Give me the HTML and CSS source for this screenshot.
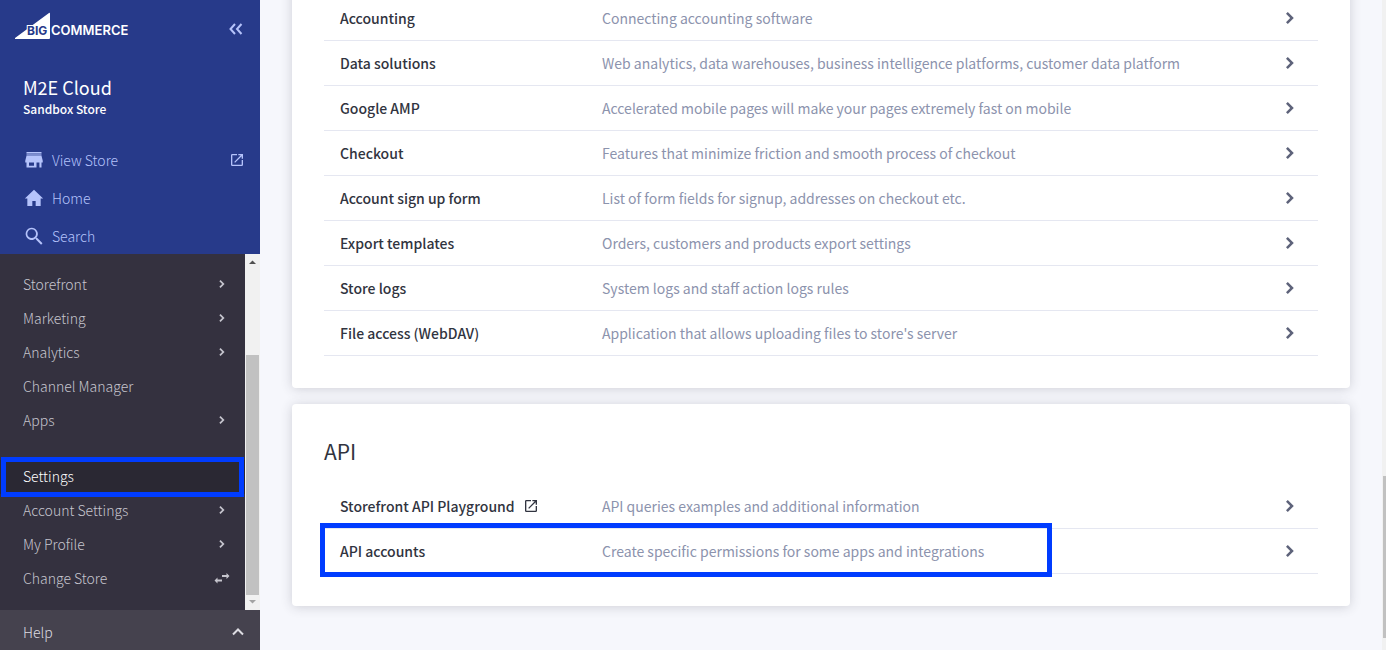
FILE: index.html
```html
<!DOCTYPE html>
<html lang="en">
<head>
<meta charset="utf-8">
<title>Settings - M2E Cloud</title>
<link rel="stylesheet" href="styles.css">
</head>
<body>
<svg class="sprite" aria-hidden="true">
  <symbol id="chevron" viewBox="0 0 24 24"><path d="M8 16.200 9.800 18l6-6-6-6L8 7.800 12.200 12z"/></symbol>
  <symbol id="open" viewBox="0 0 24 24"><path d="M19 19H5V5h7V3H5a2 2 0 0 0-2 2v14a2 2 0 0 0 2 2h14a2 2 0 0 0 2-2v-7h-2v7zM14 3v2h3.590l-9.830 9.830 1.410 1.410L19 6.410V10h2V3h-7z"/></symbol>
</svg>
<aside class="sidebar">
  <header class="sidebar-top">
    <div class="brand">
      <svg class="logo" viewBox="0 0 118 28" role="img" aria-label="BigCommerce">
        <path class="logo-shape" d="M0 26 34 1q1-1 1 1v24q0 1-1 1H1q-2 0-1-1z"/>
        <text class="logo-big" x="12" y="23">BIG</text>
        <text class="logo-text" x="36" y="23">COMMERCE</text>
      </svg>
      <button class="collapse" aria-label="Collapse menu">
        <svg viewBox="0 0 14 14"><path d="M6 2 1.500 7 6 12M12.500 2 8 7l4.500 5"/></svg>
      </button>
    </div>
    <div class="store">
      <div class="store-name">M2E Cloud</div>
      <div class="store-type">Sandbox Store</div>
    </div>
    <nav class="quick">
      <a href="#"><svg class="quick-icon" viewBox="0 0 24 24"><path opacity=".6" d="M3 4h18v3H3z"/><path d="M3 2.500h18V4H3zM3 7h18l1.500 6v2H21v6h-2.500v-6h-3.500v6H3v-6H1.500v-2zM6 15v4h6v-4z"/></svg><span>View Store</span><svg class="quick-open"><use href="#open"/></svg></a>
      <a href="#"><svg class="quick-icon" viewBox="0 0 24 24"><path d="M10 21.500v-6h4v6h6V12.500H23L12 2 1 12.500h3v9z"/></svg><span>Home</span></a>
      <a href="#"><svg class="quick-icon" viewBox="0 0 24 24"><path d="M16 14.500h-.8l-.3-.3A7.300 7.300 0 1 0 14 15.100l.3.3v.8l6.200 6.200 1.700-1.700zM9.200 14.500A5.200 5.200 0 1 1 9.200 4a5.200 5.200 0 0 1 0 10.500z"/></svg><span>Search</span></a>
    </nav>
  </header>
  <div class="menu-area">
    <nav class="menu">
      <a href="#"><span>Storefront</span><svg><use href="#chevron"/></svg></a>
      <a href="#"><span>Marketing</span><svg><use href="#chevron"/></svg></a>
      <a href="#"><span>Analytics</span><svg><use href="#chevron"/></svg></a>
      <a href="#"><span>Channel Manager</span></a>
      <a href="#"><span>Apps</span><svg><use href="#chevron"/></svg></a>
      <a href="#" class="current"><span>Settings</span></a>
      <a href="#"><span>Account Settings</span><svg><use href="#chevron"/></svg></a>
      <a href="#"><span>My Profile</span><svg><use href="#chevron"/></svg></a>
      <a href="#"><span>Change Store</span><svg viewBox="0 0 16 16"><path d="M8 5h4.500V3l3 3-3 3V7H8zM8 9.500H3.500v-2l-3 3 3 3v-2H8z"/></svg></a>
    </nav>
    <div class="menu-scroll">
      <svg viewBox="0 0 15 15"><path d="M4 10h7L7.500 6.500z"/></svg>
      <div class="menu-thumb"></div>
      <svg class="faded" viewBox="0 0 15 15"><path d="M4 5h7L7.500 8.500z"/></svg>
    </div>
  </div>
  <button class="help"><span>Help</span><svg viewBox="0 0 12 12"><path d="m1 8.500 5-5 5 5"/></svg></button>
</aside>
<main class="content">
  <section class="card card-top">
    <a class="row" href="#"><span class="name">Accounting</span><span class="desc">Connecting accounting software</span><svg class="go"><use href="#chevron"/></svg></a>
    <a class="row" href="#"><span class="name">Data solutions</span><span class="desc">Web analytics, data warehouses, business intelligence platforms, customer data platform</span><svg class="go"><use href="#chevron"/></svg></a>
    <a class="row" href="#"><span class="name">Google AMP</span><span class="desc">Accelerated mobile pages will make your pages extremely fast on mobile</span><svg class="go"><use href="#chevron"/></svg></a>
    <a class="row" href="#"><span class="name">Checkout</span><span class="desc">Features that minimize friction and smooth process of checkout</span><svg class="go"><use href="#chevron"/></svg></a>
    <a class="row" href="#"><span class="name">Account sign up form</span><span class="desc">List of form fields for signup, addresses on checkout etc.</span><svg class="go"><use href="#chevron"/></svg></a>
    <a class="row" href="#"><span class="name">Export templates</span><span class="desc">Orders, customers and products export settings</span><svg class="go"><use href="#chevron"/></svg></a>
    <a class="row" href="#"><span class="name">Store logs</span><span class="desc">System logs and staff action logs rules</span><svg class="go"><use href="#chevron"/></svg></a>
    <a class="row" href="#"><span class="name">File access (WebDAV)</span><span class="desc">Application that allows uploading files to store's server</span><svg class="go"><use href="#chevron"/></svg></a>
  </section>
  <section class="card">
    <h2>API</h2>
    <a class="row" href="#"><span class="name">Storefront API Playground<svg class="name-open"><use href="#open"/></svg></span><span class="desc">API queries examples and additional information</span><svg class="go"><use href="#chevron"/></svg></a>
    <a class="row marked" href="#"><span class="name">API accounts</span><span class="desc">Create specific permissions for some apps and integrations</span><svg class="go"><use href="#chevron"/></svg></a>
  </section>
</main>
<div class="page-scroll"><div class="page-thumb"></div></div>
</body>
</html>
```
FILE: styles.css
```css
* { box-sizing: border-box; }
body {
  margin: 0;
  height: 100vh;
  display: flex;
  overflow: hidden;
  background: #f6f7fc;
  font-family: "Noto Sans CJK SC", "Open Sans", sans-serif;
  font-size: 14px;
  line-height: 24px;
}
a { color: inherit; text-decoration: none; }
button { border: 0; padding: 0; background: none; font: inherit; color: inherit; }
svg { fill: currentColor; flex: none; }
.sprite { position: absolute; width: 0; height: 0; }

.sidebar {
  flex: 0 0 260px;
  display: flex;
  flex-direction: column;
  background: #34313f;
  color: #c6c5ce;
  font-weight: 300;
}
.sidebar-top {
  padding: 12px 15px 0;
  background: #273a8a;
  color: #b5c3fb;
  height: 254px;
}
.brand { display: flex; justify-content: space-between; align-items: flex-start; height: 32px; }
.logo { width: 118px; height: 28px; color: #fff; }
.logo-text { font: 600 13px Inter, sans-serif; }
.logo-big {
  font: 700 12px Inter, sans-serif;
  fill: #273a8a;
  stroke: #fff;
  stroke-width: 2px;
  paint-order: stroke;
}
.collapse { width: 14px; height: 14px; margin: 10px 2px 0; display: flex; }
.collapse svg, .help svg { width: 100%; fill: none; stroke: currentColor; stroke-width: 2; }
.store { padding: 32px 8px 0; color: #fff; font-weight: 400; }
.store-name { font-size: 18px; line-height: 22px; }
.store-type { font-size: 12px; line-height: 22px; font-weight: 500; }
.quick { padding: 21px 0 0 8px; }
.quick a { display: flex; align-items: center; height: 38px; }
.quick span { flex: 1; padding-left: 7px; }
.quick-icon { width: 22px; height: 20px; }
.quick-open { width: 16px; height: 16px; }

.menu-area { flex: 1; min-height: 0; display: flex; }
.menu { flex: 1; padding-top: 14px; }
.menu a { display: flex; align-items: center; height: 34px; padding: 0 15px 2px 23px; }
.menu span { flex: 1; }
.menu svg { width: 16px; height: 16px; }
.menu .current { position: relative; margin-top: 22px; background: #2a2833; color: #fff; }
.current::after, .marked::after {
  content: "";
  position: absolute;
  inset: -3px 1px;
  border: 5px solid #003cff;
}
.menu-scroll { width: 15px; background: #f1f1f1; display: flex; flex-direction: column; color: #505050; }
.menu-scroll svg { width: 15px; height: 15px; }
.menu-scroll .faded { color: #a3a3a3; }
.menu-thumb { flex: 1; margin: 86px 1px 0; background: #c1c1c1; }
.help {
  display: flex;
  align-items: center;
  justify-content: space-between;
  height: 40px;
  padding: 3px 16px 0 23px;
  background: #45424e;
  color: #dddce2;
}
.help svg { width: 12px; height: 12px; }

.content { flex: 1; min-width: 0; padding: 0 32px; display: flex; flex-direction: column; gap: 16px; }
.card {
  padding: 32px;
  background: #fff;
  border-radius: 4px;
  box-shadow: 0 1px 12px rgba(49, 52, 64, .2);
}
.card-top { margin-top: -36px; }
h2 { margin: 0 0 18px; font-size: 21px; line-height: 30px; font-weight: 400; color: #313440; }
.row {
  position: relative;
  display: flex;
  align-items: center;
  height: 45px;
  padding: 0 16px 1px;
  border-bottom: 1px solid #e5e7f1;
}
.name { flex: 0 0 262px; display: flex; align-items: center; font-weight: 500; color: #313440; }
.name-open { width: 16px; height: 16px; margin-left: 8px; }
.desc { flex: 1; color: #8c93ad; }
.go { width: 24px; height: 24px; color: #5e637a; }
.marked::after { inset: -6px 266px -4px -4px; }

.page-scroll { width: 4px; background: #f1f1f1; padding: 476px 0 12px 1px; }
.page-thumb { height: 100%; background: #c1c1c1; }
```
